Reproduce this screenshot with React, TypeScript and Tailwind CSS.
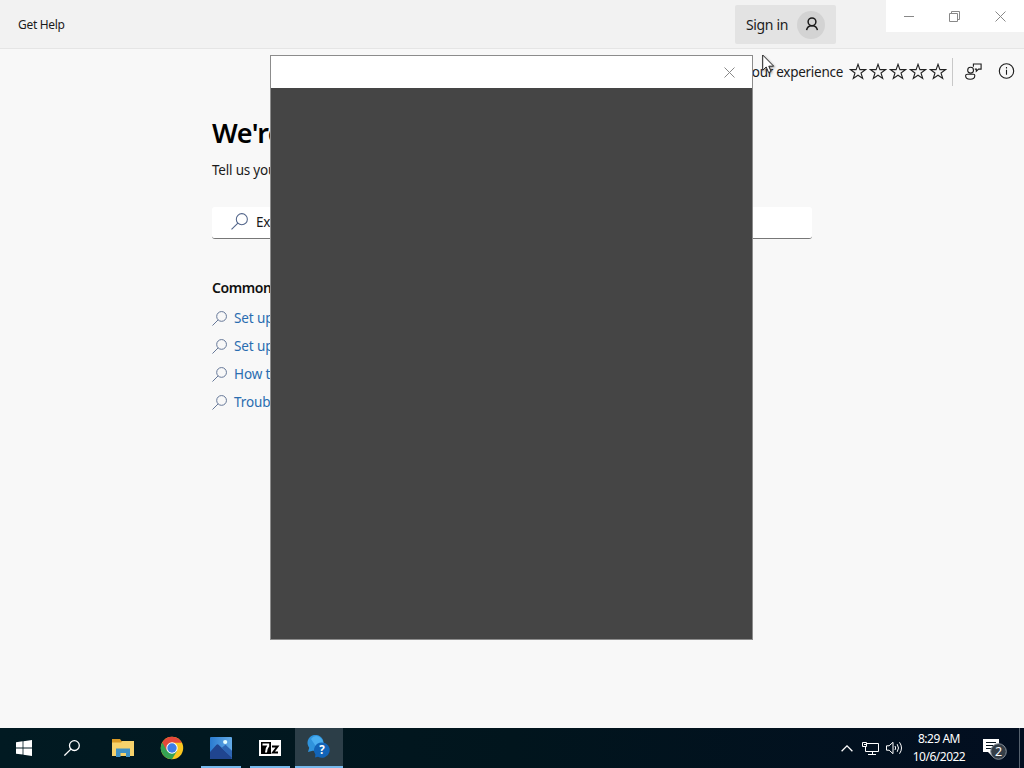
import type { ReactNode } from "react"

interface IconProps {
  className?: string
}

const suggestions = [
  "Set up email in Mail app",
  "Set up a Microsoft account",
  "How to get help in Windows",
  "Troubleshoot sound problems",
]

function SearchIcon({ className }: IconProps) {
  return (
    <svg viewBox="0 0 16 16" fill="none" stroke="currentColor" className={className}>
      <circle cx="10.2" cy="5.8" r="5.2" />
      <path d="M6.5 9.5L.5 15.5" />
    </svg>
  )
}

function StarIcon() {
  return (
    <svg viewBox="0 0 18 18" fill="none" stroke="#222" strokeWidth="1.1" className="h-[18px] w-[18px]">
      <path d="M9 1.3l1.9 5.3h5.6l-4.5 3.4 1.7 5.5L9 12.2l-4.7 3.3L6 10 1.5 6.6h5.6z" />
    </svg>
  )
}

function CloseIcon({ className }: IconProps) {
  return (
    <svg viewBox="0 0 11 11" fill="none" stroke="currentColor" className={className}>
      <path d="M.5.5l10 10M10.5.5l-10 10" />
    </svg>
  )
}

function TitleBar() {
  return (
    <header className="flex h-[49px] shrink-0 items-start border-b border-[#e5e5e5] bg-[#f2f2f2]">
      <div className="flex h-[49px] items-center pl-[18px] text-[12px] tracking-[-0.3px] text-[#1b1b1b]">Get Help</div>
      <button className="mt-[5px] ml-auto flex h-[39px] w-[101px] items-center rounded-[2px] bg-[#e3e3e3] pl-[11px]">
        <span className="w-[51px] text-left text-[14px] whitespace-nowrap tracking-[-0.35px] text-[#1b1b1b]">Sign in</span>
        <span className="flex h-7 w-7 items-center justify-center rounded-full bg-[#d3d3d3]">
          <svg viewBox="0 0 14 14" fill="none" stroke="#1b1b1b" strokeWidth="1.5" className="-mt-px ml-px h-[14px] w-[14px]">
            <circle cx="7" cy="4.8" r="3.9" />
            <path d="M1.6 13.2C2 10.4 4 8.7 7 8.7s5 1.7 5.4 4.5" />
          </svg>
        </span>
      </button>
      <div className="ml-[50px] flex h-8 w-[138px] bg-white text-[#888]">
        <span className="flex w-[46px] items-center justify-center">
          <span className="h-px w-[10px] bg-[#888]" />
        </span>
        <span className="flex w-[46px] items-center justify-center pr-px">
          <svg viewBox="0 0 11 11" fill="none" stroke="currentColor" className="h-[11px] w-[11px]">
            <path d="M.5 2.5h8v8h-8zM2.5 2.5v-2h8v8h-2" />
          </svg>
        </span>
        <span className="flex w-[46px] items-center justify-center pr-px">
          <CloseIcon className="h-[11px] w-[11px]" />
        </span>
      </div>
    </header>
  )
}

function FeedbackBar() {
  return (
    <div className="flex h-[45px] shrink-0 items-center justify-end pr-[9px] text-[#1b1b1b]">
      <span className="mt-[2px] mr-[6px] text-[13.5px] tracking-[-0.28px]">Rate your experience</span>
      <div className="flex gap-[2px]">
        <StarIcon />
        <StarIcon />
        <StarIcon />
        <StarIcon />
        <StarIcon />
      </div>
      <div className="ml-[5px] h-7 w-px bg-[#c8c8c8]" />
      <svg viewBox="0 0 17 17" fill="none" stroke="#1b1b1b" strokeWidth="1.1" className="-mt-px ml-[12px] h-[17px] w-[17px]">
        <circle cx="5.6" cy="7.2" r="2.9" />
        <path d="M2.4 11.3h6.2c.8 0 1.2.5 1.2 1.2 0 2.2-1.8 3.8-4.6 3.8S.6 14.800.6 12.800c0-.9.7-1.500 1.800-1.500z" />
        <path d="M8.400 3.800V1h7.700v5.100h-2.500l-2.300 2.100V6.100H9.800" />
      </svg>
      <svg viewBox="0 0 17 17" fill="none" stroke="#1b1b1b" strokeWidth="1.1" className="ml-[16px] h-[17px] w-[17px]">
        <circle cx="8.5" cy="8" r="7.2" />
        <path d="M8.5 6.8v5M8.5 4.100v1.400" />
      </svg>
    </div>
  )
}

function HelpContent() {
  return (
    <main className="ml-[212px] w-[600px] grow pt-[20px]">
      <h1 className="text-[27px] leading-[38px] font-semibold tracking-[-0.5px] text-black">We're here to help</h1>
      <p className="mt-[8px] text-[13.5px] leading-5 tracking-[-0.2px] text-[#1b1b1b]">
        Tell us your problem so we can get you the right help and support.
      </p>
      <div className="mt-[27px] flex h-8 items-center rounded-[3px] border-b border-[#777] bg-white pl-[19px]">
        <SearchIcon className="-mt-[2px] h-[17px] w-[17px] text-[#52658a]" />
        <span className="ml-[8px] text-[13.5px] tracking-[-0.3px] text-[#1b1b1b]">Example: Can't connect to Wi-Fi</span>
      </div>
      <h2 className="mt-[39px] text-[14px] leading-5 font-semibold tracking-[-0.4px] text-[#111]">Common questions</h2>
      <ul className="mt-[6px]">
        {suggestions.map((text) => (
          <li key={text} className="flex h-7 items-center gap-[7px] text-[13.5px] tracking-[-0.1px] text-[#2a6db0]">
            <SearchIcon className="h-[15px] w-[15px] text-[#5c6f91]" />
            {text}
          </li>
        ))}
      </ul>
    </main>
  )
}

function Dialog() {
  return (
    <div className="absolute top-[55px] left-[270px] flex h-[585px] w-[483px] flex-col border border-[#8c8c8c] bg-[#454545]">
      <div className="flex h-8 items-center justify-end bg-white pr-[17px]">
        <CloseIcon className="h-[11px] w-[11px] text-[#888]" />
      </div>
    </div>
  )
}

function TaskButton({ children, className = "" }: { children: ReactNode; className?: string }) {
  return <div className={`relative flex h-10 w-12 shrink-0 items-center justify-center ${className}`}>{children}</div>
}

function Taskbar() {
  return (
    <footer className="flex h-10 shrink-0 bg-linear-to-r from-[#011a22] via-[#01151d] to-[#020e20] text-white">
      <TaskButton>
        <svg viewBox="0 0 16 16" fill="#fff" className="h-4 w-4">
          <path d="M0 2.2l6.6-.9v6.2H0zM7.4 1.2L16 0v7.5H7.4zM0 8.4h6.6v6.2L0 13.7zM7.4 8.4H16V16l-8.6-1.2z" />
        </svg>
      </TaskButton>
      <TaskButton>
        <svg viewBox="0 0 16 16" fill="none" stroke="#fff" strokeWidth="1.3" className="h-4 w-4">
          <circle cx="10.4" cy="5.6" r="4.9" />
          <path d="M6.9 9.1L.4 15.6" />
        </svg>
      </TaskButton>
      <TaskButton className="ml-[3px]">
        <svg viewBox="0 0 22 20" className="h-5 w-[22px]">
          <path d="M0 1h8l1.5 2H22v4H0z" fill="#d99a25" />
          <path d="M0 4.5h9L10.5 3H22v15H0z" fill="#f6d26b" />
          <path d="M4 10.5h14V19h-4v-4H8.5v4H4z" fill="#3f91c5" />
        </svg>
      </TaskButton>
      <TaskButton className="ml-px">
        <svg viewBox="0 0 24 24" className="h-6 w-6">
          <circle cx="12" cy="12" r="11.2" fill="#fbc61f" />
          <path d="M2.3 6.4A11.2 11.2 0 0012 23.2L17 14.9 12 12z" fill="#35a354" />
          <path d="M12 .8A11.2 11.2 0 002.3 6.4L7 14.9 12 6.8h9.9A11.2 11.2 0 0012 .8z" fill="#e5483b" />
          <circle cx="12" cy="12" r="5.7" fill="#fff" />
          <circle cx="12" cy="12" r="4.7" fill="#3e7de8" />
        </svg>
      </TaskButton>
      <TaskButton className="ml-px">
        <svg viewBox="0 0 22 22" className="h-[22px] w-[22px]">
          <defs>
            <linearGradient id="photoSky" x1="0" y1="0" x2="1" y2="0">
              <stop offset="0" stopColor="#2a7bd0" />
              <stop offset="1" stopColor="#64abe7" />
            </linearGradient>
          </defs>
          <rect width="22" height="22" rx="1" fill="url(#photoSky)" />
          <path d="M0 15l6.5-7.2q1-1 2 0L22 20.5v.5q0 1-1 1H1q-1 0-1-1z" fill="#20458f" />
          <path d="M11.5 11l4-3.2 6.5 6v6.7z" fill="#2d65b3" />
          <circle cx="15.2" cy="5" r="2.1" fill="#e7ffff" />
        </svg>
        <span className="absolute bottom-0 left-1 h-[2px] w-10 bg-[#76b9ed]" />
      </TaskButton>
      <TaskButton className="ml-px">
        <svg viewBox="0 0 22 16" className="h-4 w-[22px]">
          <path d="M0 0h22v16H0z" fill="#fff" />
          <path d="M2 2h10v12H2z" fill="#000" />
          <path d="M3.5 4.5h5.700v1.500Q7 8.500 7 12.500" fill="none" stroke="#fff" strokeWidth="2" />
          <path d="M13 6.500h5.500l-4.500 6h5" fill="none" stroke="#000" strokeWidth="2" />
        </svg>
        <span className="absolute bottom-0 left-1 h-[2px] w-10 bg-[#76b9ed]" />
      </TaskButton>
      <TaskButton className="ml-px bg-[#2c3e48]">
        <svg viewBox="0 0 24 24" className="-mt-[2px] h-6 w-6">
          <path d="M1 17l1.200-4.200A8 8 0 1116.500 8L12 16.200l-6.200-.4z" fill="#2f93dc" />
          <path d="M9 1a8 8 0 017.500 7L10 13 4 4q2-3 5-3z" fill="#4aaef0" />
          <path d="M15 7.400a7.700 7.700 0 11-4 14.300L8 22.500l.4-3A7.700 7.700 0 0115 7.400z" fill="#1264b8" />
          <text x="15" y="19.2" textAnchor="middle" fontSize="11.5" fontWeight="700" fill="#fff">?</text>
        </svg>
        <span className="absolute bottom-0 left-0 h-[2px] w-12 bg-[#76b9ed]" />
      </TaskButton>
      <div className="ml-auto flex h-10 items-center">
        <svg viewBox="0 0 12 7" fill="none" stroke="#fff" strokeWidth="1.3" className="h-[7px] w-3">
          <path d="M.6 6.3L6 .9l5.4 5.4" />
        </svg>
        <svg viewBox="0 0 17 15" fill="none" stroke="#fff" className="ml-[9px] h-[15px] w-[17px]">
          <path d="M5 2.500h11.500v8H3.500v-5M10.500 10.500v3M6 13.500h8M.5 1.500h4v4h-4z" />
          <path d="M2 3.500h2" />
        </svg>
        <svg viewBox="0 0 17 14" fill="none" stroke="#fff" className="ml-[7px] h-[14px] w-[17px]">
          <path d="M.5 4.800h2.600L7 1.300v11.400L3.100 9.200H.5z" />
          <path d="M9 5q1.400 2 0 4M11.200 3.200q2.600 3.800 0 7.600M13.500 1.300q4 5.700 0 11.400" />
        </svg>
        <div className="ml-[8px] w-[56px] text-center text-[12px] leading-[18px] tracking-[-0.5px] whitespace-nowrap">
          <div>8:29 AM</div>
          <div>10/6/2022</div>
        </div>
        <div className="relative ml-[16px] h-6 w-6">
          <svg viewBox="0 0 24 24" className="h-6 w-6">
            <path d="M0 3h16v13H9v4l-4-4H0z" fill="#fff" />
            <path d="M3 6.500h10M3 9.500h10M3 12.500h6" stroke="#06141f" />
            <circle cx="15.5" cy="15.5" r="7.8" fill="#353e47" stroke="#87909a" />
            <text x="15.500" y="20" textAnchor="middle" fontSize="12.5" fill="#fff">2</text>
          </svg>
        </div>
        <div className="ml-[12px] h-10 w-px bg-[#56616e]" />
        <div className="w-1" />
      </div>
    </footer>
  )
}

export default function App() {
  return (
    <div className="relative flex h-[768px] w-[1024px] flex-col overflow-hidden bg-[#f8f8f8] font-['Noto_Sans','Open_Sans',sans-serif]">
      <TitleBar />
      <FeedbackBar />
      <HelpContent />
      <Taskbar />
      <Dialog />
      {/* Mouse cursor */}
      <svg viewBox="0 0 13 20" className="absolute top-[54px] left-[762px] h-5 w-[13px] drop-shadow-[1px_1px_1px_rgba(0,0,0,0.35)]">
        <path d="M.7 1v15.300l3.500-3.300 2.400 5.600 2.500-1.100-2.300-5.300h4.900z" fill="#fff" stroke="#222" />
      </svg>
    </div>
  )
}
